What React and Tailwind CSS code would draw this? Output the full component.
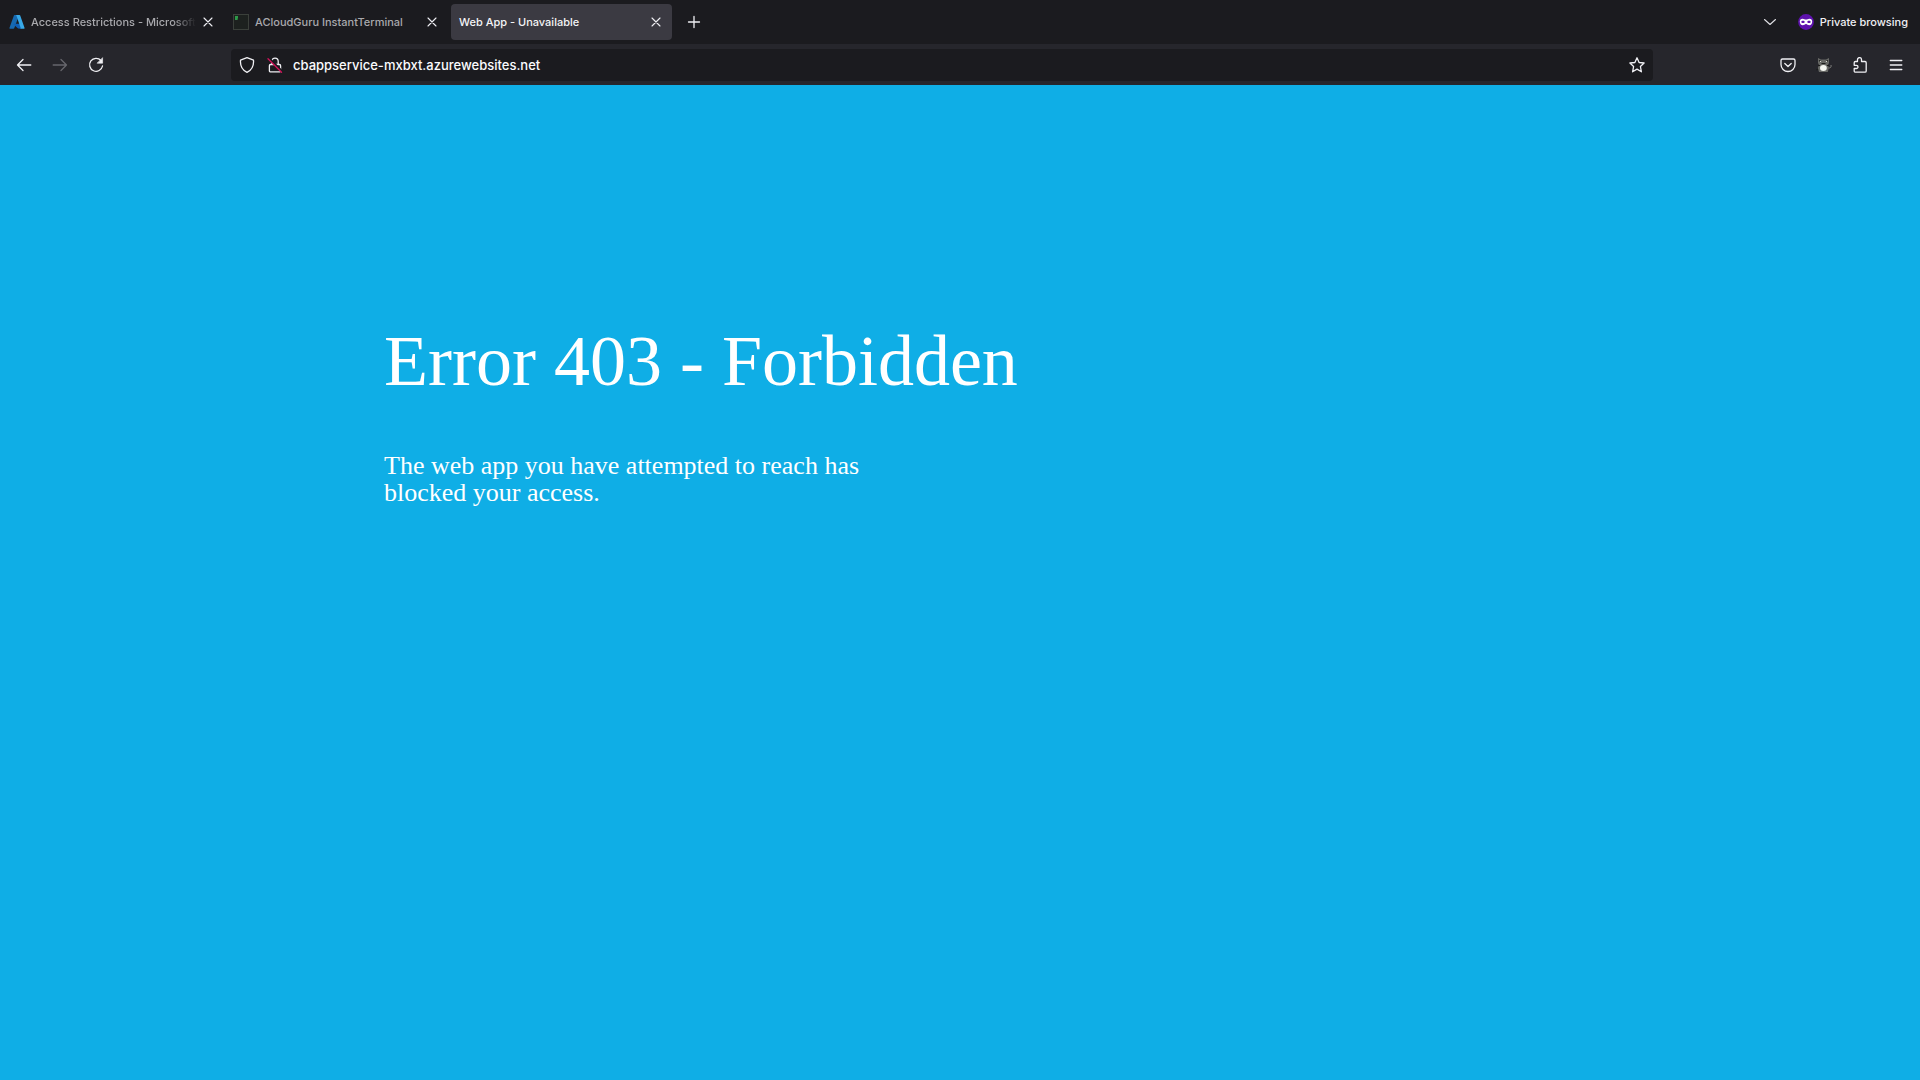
function Icon({ children, className = "size-4" }) {
  return (
    <svg
      viewBox="0 0 16 16"
      className={`shrink-0 ${className}`}
      fill="none"
      stroke="currentColor"
      strokeWidth="1.1"
      strokeLinecap="round"
      strokeLinejoin="round"
      aria-hidden="true"
    >
      {children}
    </svg>
  );
}

function AzureIcon() {
  return (
    <svg viewBox="0 0 16 16" className="size-4 shrink-0" aria-hidden="true">
      <path d="M5.6 1h4.6L5.2 14.3a.8.8 0 0 1-.7.5H1.2a.7.7 0 0 1-.7-1L4.9 1.5a.8.8 0 0 1 .7-.5z" fill="#1769b0" />
      <path d="M4.6 9.8h6.8l.8 4.9-3.1-.1-4.6-4.1c-.3-.3-.2-.7.1-.7z" fill="#0f5fb4" />
      <path d="M6.7 1h3.8c.3 0 .6.2.7.5l4.3 12.3a.7.7 0 0 1-.7 1h-3.9a.7.7 0 0 0 .7-1L7.4 1.5a.8.8 0 0 0-.7-.5z" fill="#38a9e8" />
    </svg>
  );
}

function TerminalIcon() {
  return (
    <svg viewBox="0 0 16 16" className="size-4 shrink-0" aria-hidden="true">
      <rect x=".5" y=".5" width="15" height="15" fill="#1d211f" stroke="#3b403b" />
      <path d="M2 2h3v1.500L4.500 6H2z" fill="#2d9a49" />
    </svg>
  );
}

function CloseButton({ label }) {
  return (
    <button type="button" aria-label={label} className="flex size-6 shrink-0 items-center justify-center">
      <Icon className="size-4">
        <path d="M4 4l8 8M12 4l-8 8" />
      </Icon>
    </button>
  );
}

function Tab({ title, icon, active, fade }) {
  return (
    <div
      className={`flex h-9 w-[221px] items-center rounded pr-1 ${
        active ? "bg-[#3b3a42] pl-2 text-[#f4f4f7]" : "pl-[6px] text-[#a9a9ad]"
      }`}
    >
      <button type="button" role="tab" aria-selected={!!active} className="flex h-full min-w-0 grow items-center gap-[6px]">
        {icon}
        <span
          className={`whitespace-nowrap ${
            fade ? "[mask-image:linear-gradient(to_right,black_86%,transparent)]" : ""
          }`}
        >
          {title}
        </span>
      </button>
      <span className="flex text-[#f0f0f4]">
        <CloseButton label={`Close ${title}`} />
      </span>
    </div>
  );
}

function TabStrip() {
  return (
    <div className="flex h-11 items-center bg-[#1b1b1f] pr-3 pl-[3px] text-[11px]">
      <div role="tablist" className="flex gap-[3px]">
        <Tab title="Access Restrictions - Microsoft" icon={<AzureIcon />} fade />
        <Tab title="ACloudGuru InstantTerminal" icon={<TerminalIcon />} />
        <Tab title="Web App - Unavailable" active />
      </div>
      <button type="button" aria-label="New tab" className="ml-2 flex size-7 items-center justify-center text-[#f0f0f4]">
        <Icon>
          <path strokeWidth="1.300" d="M8 2.500v11M2.500 8h11" />
        </Icon>
      </button>
      <button type="button" aria-label="List all tabs" className="ml-auto flex size-8 items-center justify-center text-[#e0e0e4]">
        <Icon>
          <path d="M2.500 5.500L8 10.500l5.500-5" />
        </Icon>
      </button>
      <div className="ml-3 flex items-center gap-[6px] text-[#f0f0f4]">
        <svg viewBox="0 0 16 16" className="size-4 shrink-0" aria-hidden="true">
          <circle cx="8" cy="8" r="7.900" fill="#5e12ad" />
          <path
            fill="#fff"
            fillRule="evenodd"
            d="M4.600 4.700c1.500 0 2.200.8 3.400.8s1.900-.8 3.400-.8c1.900 0 2.800 1.100 2.800 2.800 0 2.200-1.200 3.700-2.900 3.700-1.500 0-2.200-1.300-3.300-1.300s-1.800 1.300-3.300 1.300c-1.700 0-2.900-1.500-2.900-3.700 0-1.700.9-2.800 2.800-2.800zM5 6.800c-1 0-1.700.6-1.700 1.100S4 9.100 5 9.100s1.700-.6 1.700-1.200S6 6.800 5 6.800zm6 0c-1 0-1.700.6-1.700 1.100S10 9.100 11 9.100s1.700-.6 1.700-1.200S12 6.800 11 6.800z"
          />
        </svg>
        <span>Private browsing</span>
      </div>
    </div>
  );
}

function ToolButton({ label, disabled, children }) {
  return (
    <button
      type="button"
      aria-label={label}
      disabled={disabled}
      className="flex size-9 shrink-0 items-center justify-center disabled:text-[#66666c]"
    >
      {children}
    </button>
  );
}

function Toolbar() {
  return (
    <div className="flex h-[41px] items-center bg-[#26262c] px-[6px] text-[#f0f0f4]">
      <div className="flex w-[225px] shrink-0">
        <ToolButton label="Back">
          <Icon>
            <path strokeWidth="1.300" d="M14.800 8H1.500M7 2.500L1.500 8 7 13.500" />
          </Icon>
        </ToolButton>
        <ToolButton label="Forward" disabled>
          <Icon>
            <path strokeWidth="1.300" d="M1.200 8h13.300M9 2.500L14.500 8 9 13.500" />
          </Icon>
        </ToolButton>
        <ToolButton label="Reload">
          <Icon>
            <path strokeWidth="1.300" d="M13 3.500A6.500 6.500 0 1 0 14.500 9" />
            <path fill="currentColor" strokeWidth=".6" d="M14.600 1v5.200H9.400z" />
          </Icon>
        </ToolButton>
      </div>
      <div className="flex h-8 grow items-center rounded-sm bg-[#1b1b1f]">
        <button type="button" aria-label="Tracking protection" className="flex h-8 w-8 items-center justify-center">
          <Icon>
            <path strokeWidth="1.300" d="M8 .7l6.500 2.500c.4 5-1.200 9.500-6.500 12.100C2.700 12.700 1.100 8.200 1.500 3.200z" />
          </Icon>
        </button>
        <button type="button" aria-label="Connection is not secure" className="flex h-8 w-6 items-center justify-center">
          <Icon>
            <path strokeWidth="1.300" d="M4.800 7.500V4.300a3.200 3.200 0 0 1 6.400 0v3.200M3.600 7.500h8.800a1.200 1.200 0 0 1 1.200 1.200v5a1.200 1.200 0 0 1-1.200 1.200H3.600a1.200 1.200 0 0 1-1.200-1.200v-5a1.200 1.200 0 0 1 1.200-1.200z" />
            <path stroke="#1b1b1f" strokeWidth="2.500" d="M3 2.500l11.500 11.500" />
            <path stroke="#d3135a" strokeWidth="1.300" d="M1 1.800L14.500 15.300" />
          </Icon>
        </button>
        <input
          type="text"
          aria-label="Address"
          defaultValue="cbappservice-mxbxt.azurewebsites.net"
          className="h-8 min-w-0 grow bg-transparent pl-[6px] text-[13px] text-[#fbfbfe] outline-none"
        />
        <button type="button" aria-label="Bookmark this page" className="flex size-8 items-center justify-center">
          <Icon>
            <path strokeWidth="1.300" d="M8 .8l2.100 4.700 5 .5-3.700 3.500 1 5.300L8 12.100l-4.400 2.700 1-5.300L.9 6l5-.5z" />
          </Icon>
        </button>
      </div>
      <div className="flex w-[261px] shrink-0 justify-end">
        <ToolButton label="Save to Pocket">
          <Icon>
            <path strokeWidth="1.300" d="M2.500 2h11A1.500 1.500 0 0 1 15 3.500V7.500a7 7 0 0 1-14 0V3.500A1.500 1.500 0 0 1 2.500 2zM4.800 6.500L8 9.500l3.200-3" />
          </Icon>
        </ToolButton>
        <ToolButton label="Extension">
          <svg viewBox="0 0 16 16" className="size-4" aria-hidden="true">
            <path d="M2 1l3 1.500h5L13 1v5l-1 2 .8 3-1 4H3l-1.200-4L3 8 2 6z" fill="#686966" />
            <path d="M3 3.500l3 1.500M12 3.500L9 5M2 12l-1.500 1M5.500 6.500h4M2 8.500h2M11 8.500h2" stroke="#1c1d1b" strokeWidth="1.200" />
            <path d="M12.500 11c2 .2 3-1 2.500-3" stroke="#80817d" fill="none" />
            <path d="M4 4.300l1.600.6M9.400 4.900L11 4.300" stroke="#deded6" />
            <ellipse cx="7.400" cy="11" rx="3.400" ry="2.900" fill="#f5f7f2" />
          </svg>
        </ToolButton>
        <ToolButton label="Extensions">
          <Icon>
            <path strokeWidth="1.300" d="M5.500 4.500V2.600a2 2 0 0 1 4 0v1.900h3.500a1.200 1.200 0 0 1 1.200 1.200v8.300a1.200 1.200 0 0 1-1.200 1.200H3.400A1.200 1.200 0 0 1 2.200 14v-2.500h2.200a1.600 1.600 0 0 0 0-3.200H2.200V5.700a1.200 1.200 0 0 1 1.200-1.200z" />
          </Icon>
        </ToolButton>
        <ToolButton label="Open application menu">
          <Icon>
            <path strokeWidth="1.300" d="M2.300 3.500h11.500M2.300 8h11.500M2.300 12.500h11.500" />
          </Icon>
        </ToolButton>
      </div>
    </div>
  );
}

export default function App() {
  return (
    <div className="flex min-h-screen flex-col bg-[#0faee6]">
      <header className="font-['Inter',sans-serif] font-medium">
        <TabStrip />
        <Toolbar />
      </header>
      <main className="px-[20%] pt-[236px] font-['Liberation_Serif',serif] text-white">
        <h1 className="text-[72px] leading-[80px]">Error 403 - Forbidden</h1>
        <p className="mt-[51px] max-w-[520px] text-[26px] leading-[27px]">
          The web app you have attempted to reach has blocked your access.
        </p>
      </main>
    </div>
  );
}
